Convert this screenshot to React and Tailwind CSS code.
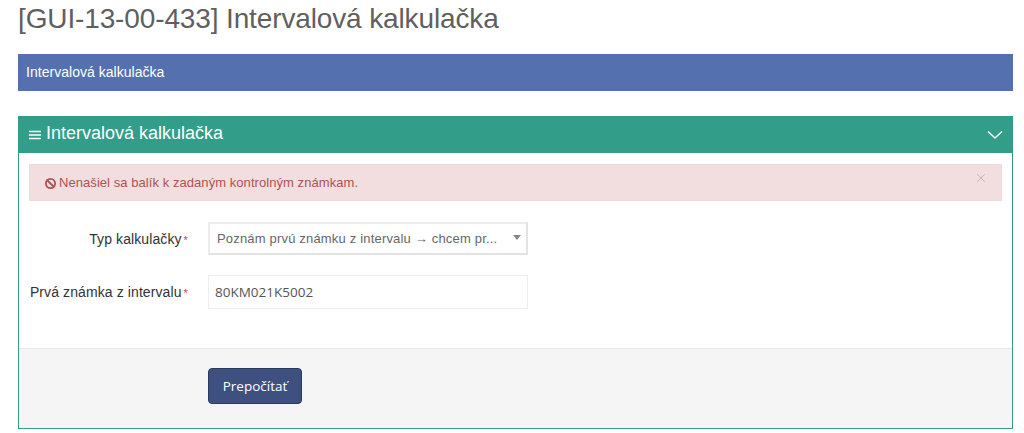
import React from "react";
import { Ban, X } from "lucide-react";

const sans = "font-['Liberation_Sans',Arial,sans-serif]";
const open = "font-['Open_Sans','Noto_Sans',sans-serif]";

function Label({ children }) {
  return (
    <div className="flex w-[189px] shrink-0 items-baseline justify-end pr-[20px] text-[14px] leading-[20px] tracking-[0.1px] text-[#333333]">
      {children}
      <span className="ml-[2px] text-[11px] leading-none text-[#b94a48]">*</span>
    </div>
  );
}

export default function App() {
  return (
    <div className={`${sans} h-[433px] overflow-hidden bg-white px-[18px] pr-[11px]`}>
      <h1 className="h-[54px] pt-[1px] text-[28px] leading-[36px] font-normal tracking-[-0.13px] text-[#5f5f5f]">
        [GUI-13-00-433] Intervalová kalkulačka
      </h1>
      <div className="flex h-[37px] items-center bg-[#5470af] px-[8px] text-[14px] tracking-[0.03px] text-white">
        Intervalová kalkulačka
      </div>
      <section className="mt-[25px] flex h-[313px] flex-col border border-[#329d88]">
        <header className="-mx-px -mt-px flex h-[37px] shrink-0 items-center justify-between bg-[#329d88] pr-[10px] pb-[2px] pl-[11px] text-white">
          <div className="flex items-center gap-[5px] text-[18px]">
            <svg width="12" height="10" viewBox="0 0 12 10" className="mt-[2px]" aria-hidden="true">
              <path d="M0 1.5h12M0 5h12M0 8.5h12" stroke="currentColor" strokeWidth="1.6" fill="none" />
            </svg>
            <span>Intervalová kalkulačka</span>
          </div>
          <svg width="16" height="10" viewBox="0 0 16 10" className="mt-[3px]" aria-hidden="true">
            <path d="M1 1.5 8 8l7-6.500" stroke="currentColor" strokeWidth="1.5" fill="none" />
          </svg>
        </header>
        <div className="flex flex-1 flex-col px-[10px] pt-[11px]">
          <div className="flex h-[37px] items-start justify-between border border-[#ebdcdc] bg-[#f2dede] pt-[9px] pr-[13px] pl-[15px] text-[13px] leading-[18px] tracking-[0.06px] text-[#ad5353]">
            <div className="flex items-center gap-[3px]">
              <Ban size={11} strokeWidth={4} />
              <span>Nenašiel sa balík k zadaným kontrolným známkam.</span>
            </div>
            <X size={14} strokeWidth={1.5} className="-mt-[3px] text-[#c2acac]" />
          </div>
          <div className="-ml-[10px] mt-[21px] flex items-center">
            <Label>Typ kalkulačky</Label>
            <div className="flex h-[33px] w-[320px] items-center justify-between border-2 border-[#e3e3e3] border-t-[#ececec] border-l-[#ececec] bg-white pr-[5px] pl-[7px] text-[13px] tracking-[0.18px] text-[#666666]">
              <span>Poznám prvú známku z intervalu → chcem pr...</span>
              <span className="mb-[3px] h-0 w-0 border-x-[4px] border-t-[5px] border-x-transparent border-t-[#888888]" />
            </div>
          </div>
          <div className="-ml-[10px] mt-[20px] flex items-center">
            <Label>Prvá známka z intervalu</Label>
            <div className={`${open} flex h-[34px] w-[320px] items-center border border-[#eeeeee] bg-white px-[6px] text-[13.500px] text-[#555555]`}>
              80KM021K5002
            </div>
          </div>
          <footer className="-mx-[10px] mt-auto flex h-[80px] shrink-0 items-start border-t border-[#e8e8e8] bg-[#f5f5f5] pt-[19px] pl-[189px]">
            <button className={`${open} h-[36px] w-[94px] rounded-[4px] border border-[#2a3a5e] bg-[#3d5080] text-[13.500px] text-white`}>
              Prepočítať
            </button>
          </footer>
        </div>
      </section>
    </div>
  );
}
